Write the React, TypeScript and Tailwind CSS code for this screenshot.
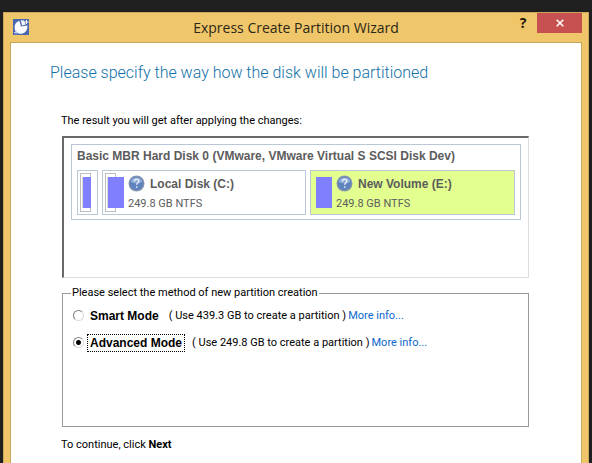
import type { ReactNode } from "react";

function AppIcon() {
  return (
    <svg width="16" height="16" viewBox="0 0 16 16" aria-hidden="true">
      <rect width="16" height="16" fill="#4a68b0" />
      <path d="M6.4 1.8 8 7.6l6.4-1C15 11 12 14.6 8 14.8c-3.6.2-5.6-1.3-6.2-4.3C1 6 3 3 6.4 1.8Z" fill="#fbfcff" />
      <path d="M7.8 1.2 9 6.4l3.8-.8L11 1.6Z" fill="#f3f6fd" />
      <path d="M13.5 1v4M11.5 3h4" stroke="#fff" strokeWidth="1" />
      <path d="M1 13.5h4M3 11.5v4" stroke="#b9c9ea" strokeWidth="1" />
    </svg>
  );
}

function HelpBall() {
  return (
    <svg width="17" height="17" viewBox="0 0 17 17" className="shrink-0" aria-hidden="true">
      <circle cx="8.5" cy="8.5" r="8" fill="#8a98ad" />
      <circle cx="8.5" cy="8.3" r="6.9" fill="#5f83bd" />
      <path d="M2.6 7a6 5.4 0 0 1 11.8 0Q8.5 9.4 2.6 7Z" fill="#8daad6" />
      <path
        d="M6.3 6.4c0-3 4.6-2.9 4.6-.3 0 1.7-2.2 1.7-2.2 3.7M8.7 11.2v1.6"
        fill="none"
        stroke="#e4ecf8"
        strokeWidth="1.5"
      />
    </svg>
  );
}

function UsageBar({ width, bracket }: { width: string; bracket?: boolean }) {
  return (
    <div className="flex h-[39px] items-center">
      {bracket && (
        <div className="-mr-2 h-[39px] w-[11px] border border-[#bdbdbd] bg-white py-[3px] pl-px">
          <div className="h-full border-l border-[#dcdcdc]" />
        </div>
      )}
      <div className={`relative h-[31px] bg-[#8080ff] ${width}`} />
    </div>
  );
}

type PartitionProps = { name: string; size: string; bracket?: boolean; active?: boolean };

function Partition({ name, size, bracket, active }: PartitionProps) {
  return (
    <div
      className={`flex h-[45px] flex-1 items-center gap-1 border border-[#b9c7d6] ${
        active ? "bg-[#e2ff90] pl-[5px]" : "bg-white px-[2px]"
      }`}
    >
      <UsageBar width="w-4" bracket={bracket} />
      <div className="flex flex-col whitespace-nowrap text-[#5c5c5c]">
        <div className="flex h-5 items-center gap-[5px] font-['Liberation_Sans',Arial,sans-serif] text-[12px] font-bold">
          <HelpBall />
          {name}
        </div>
        <div className="h-[18px] leading-5">{size}</div>
      </div>
    </div>
  );
}

type ModeRowProps = { id: string; label: string; note: string; checked?: boolean };

function ModeRow({ id, label, note, checked }: ModeRowProps) {
  return (
    <div className="flex h-[27px] items-center whitespace-nowrap">
      <input
        type="radio"
        id={id}
        name="mode"
        defaultChecked={checked}
        className="peer size-[11px] shrink-0 appearance-none rounded-full border border-t-[#808080] border-r-[#dcdcdc] border-b-[#dcdcdc] border-l-[#808080] bg-white checked:bg-[radial-gradient(circle,#000_2px,transparent_3px)]"
      />
      <label
        htmlFor={id}
        className="ml-[3px] border border-dotted border-transparent px-[2px] font-['Liberation_Sans',Arial,sans-serif] text-[12px] leading-4 font-bold peer-checked:border-black"
      >
        {label}
      </label>
      <span className="ml-[7px] pt-[2px]">{note}</span>
      <a href="#" className="ml-[2px] pt-[2px] text-[#0a66cc]">
        More info...
      </a>
    </div>
  );
}

function TitleBar({ children }: { children: ReactNode }) {
  return (
    <header className="grid h-[29px] grid-cols-[1fr_auto_1fr] items-start">
      <div className="pt-[6px] pl-[9px]">
        <AppIcon />
      </div>
      <h1 className="font-['Open_Sans',sans-serif] text-[14px] leading-[30px] text-[#2c2618]">
        {children}
      </h1>
      <div className="flex justify-end pr-[6px]">
        <button
          type="button"
          aria-label="Help"
          className="mr-1 h-5 w-5 font-['Open_Sans',sans-serif] text-[14px] leading-5 font-bold text-[#1c1608]"
        >
          ?
        </button>
        <button
          type="button"
          aria-label="Close"
          className="flex h-5 w-[45px] items-center justify-center bg-[#c75050]"
        >
          <svg width="8" height="8" viewBox="0 0 8 8">
            <path d="M.7.7 7.3 7.3M7.3.7.7 7.3" stroke="#fff" strokeWidth="1.6" />
          </svg>
        </button>
      </div>
    </header>
  );
}

export default function App() {
  return (
    <div className="flex h-screen overflow-hidden bg-[#202020] px-[3px] pt-3 font-[Roboto,sans-serif] text-[11px] text-black">
      <div className="flex flex-1 flex-col border-x border-t border-[#c9a75a] bg-[#efc76a]">
        <TitleBar>Express Create Partition Wizard</TitleBar>
        <main className="mx-[6px] flex-1 border-x border-t border-[#c9a75a] bg-white pr-[52px] pl-[51px]">
          <h2 className="-ml-3 pt-[18px] text-[16px] leading-6 font-light whitespace-nowrap text-[#1170a8]">
            Please specify the way how the disk will be partitioned
          </h2>
          <p className="mt-7 -ml-px leading-4">The result you will get after applying the changes:</p>

          <section className="mt-[7px] h-[142px] border-t-2 border-r border-b border-l-2 border-t-[#696969] border-r-[#dedede] border-b-[#dedede] border-l-[#696969] px-[7px] pt-[6px]">
            <div className="h-[76px] border border-[#b9c7d6] px-[5px]">
              <h3 className="h-[25px] font-['Liberation_Sans',Arial,sans-serif] text-[12px] leading-[22px] font-bold whitespace-nowrap text-[#5c5c5c]">
                Basic MBR Hard Disk 0 (VMware, VMware Virtual S SCSI Disk Dev)
              </h3>
              <div className="flex gap-1">
                <div className="flex h-[45px] w-[21px] items-center border border-[#b9c7d6] bg-white pl-[2px]">
                  <UsageBar width="w-2" bracket />
                </div>
                <Partition name="Local Disk (C:)" size="249.8 GB NTFS" bracket />
                <Partition name="New Volume (E:)" size="249.8 GB NTFS" active />
              </div>
            </div>
          </section>

          <fieldset className="mt-[7px] h-[142px] border border-[#999] px-[9px]">
            <legend className="-ml-px px-px leading-4">
              Please select the method of new partition creation
            </legend>
            <div className="pt-px pl-px">
              <ModeRow id="smart" label="Smart Mode" note="( Use 439.3 GB to create a partition )" />
              <ModeRow
                id="advanced"
                label="Advanced Mode"
                note="( Use 249.8 GB to create a partition )"
                checked
              />
            </div>
          </fieldset>

          <p className="mt-[10px] -ml-px leading-4">
            To continue, click <b>Next</b>
          </p>
        </main>
      </div>
    </div>
  );
}
